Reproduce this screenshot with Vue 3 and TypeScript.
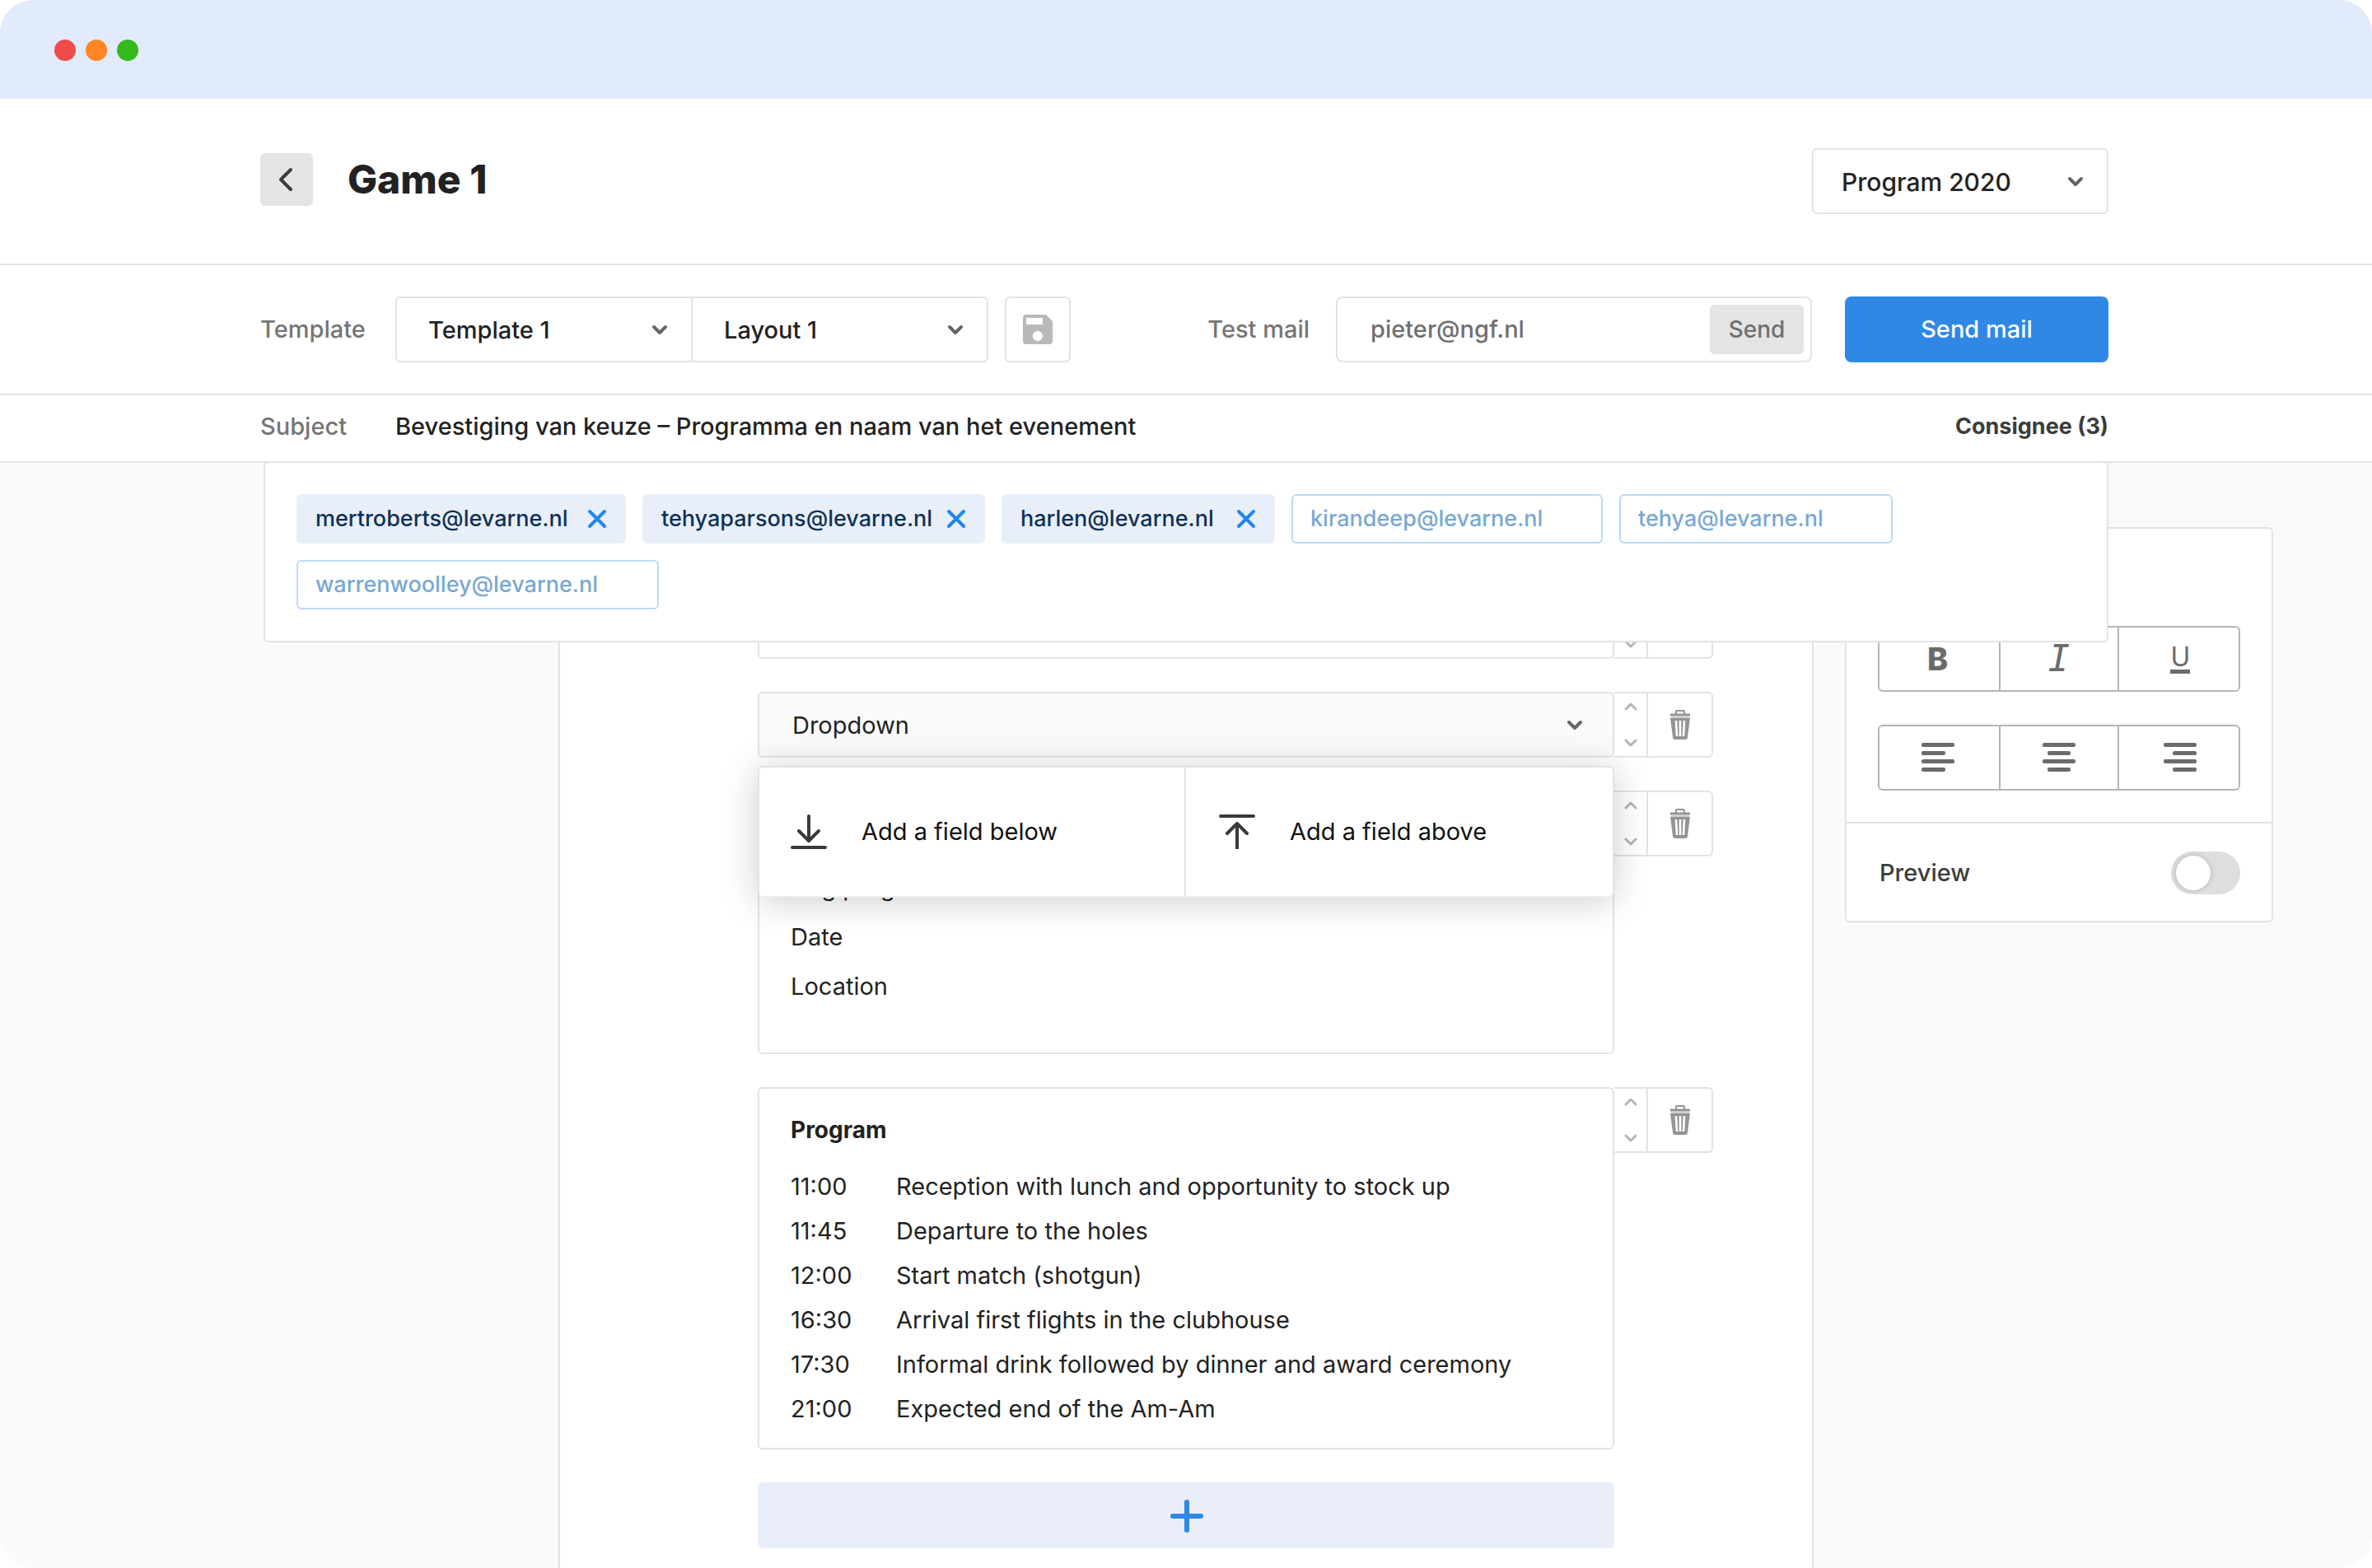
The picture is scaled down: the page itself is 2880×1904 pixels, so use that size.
<script setup lang="ts">
import { ref } from 'vue'

interface Chip {
  email: string
  width: number
}

interface ScheduleRow {
  time: string
  text: string
}

const selected: Chip[] = [
  { email: 'mertroberts@levarne.nl', width: 400 },
  { email: 'tehyaparsons@levarne.nl', width: 416 },
  { email: 'harlen@levarne.nl', width: 332 },
]

const suggested: Chip[] = [
  { email: 'kirandeep@levarne.nl', width: 378 },
  { email: 'tehya@levarne.nl', width: 332 },
  { email: 'warrenwoolley@levarne.nl', width: 440 },
]

const schedule: ScheduleRow[] = [
  { time: '11:00', text: 'Reception with lunch and opportunity to stock up' },
  { time: '11:45', text: 'Departure to the holes' },
  { time: '12:00', text: 'Start match (shotgun)' },
  { time: '16:30', text: 'Arrival first flights in the clubhouse' },
  { time: '17:30', text: 'Informal drink followed by dinner and award ceremony' },
  { time: '21:00', text: 'Expected end of the Am-Am' },
]

// Bars of the alignment icons: [x, width] from top to bottom.
const alignments: { name: string; bars: [number, number][] }[] = [
  { name: 'Align left', bars: [[0, 40], [0, 29], [0, 40], [0, 29]] },
  { name: 'Align center', bars: [[0, 40], [6, 28], [0, 40], [6, 28]] },
  { name: 'Align right', bars: [[0, 40], [11, 29], [0, 40], [11, 29]] },
]

const blocks = ['empty', 'dropdown', 'details', 'program'] as const

const subject = ref('Bevestiging van keuze – Programma en naam van het evenement')
const testMail = ref('pieter@ngf.nl')
const preview = ref(false)
</script>

<template>
  <div class="window">
    <div class="titlebar">
      <span class="dot red"></span>
      <span class="dot orange"></span>
      <span class="dot green"></span>
    </div>

    <header class="header">
      <div class="heading">
        <button class="back" type="button" aria-label="Back">
          <svg width="20" height="30" viewBox="0 0 20 30"><path d="M15 3 L3 15 L15 27" /></svg>
        </button>
        <h1>Game 1</h1>
      </div>
      <div class="select program-select">
        <select aria-label="Program">
          <option>Program 2020</option>
        </select>
        <svg class="chevron" width="20" height="14" viewBox="0 0 20 14"><path d="M3 3 L10 10 L17 3" /></svg>
      </div>
    </header>

    <div class="toolbar">
      <label class="label lead" for="template">Template</label>
      <div class="select-pair">
        <div class="select">
          <select id="template">
            <option>Template 1</option>
          </select>
          <svg class="chevron" width="20" height="14" viewBox="0 0 20 14"><path d="M3 3 L10 10 L17 3" /></svg>
        </div>
        <div class="select">
          <select aria-label="Layout">
            <option>Layout 1</option>
          </select>
          <svg class="chevron" width="20" height="14" viewBox="0 0 20 14"><path d="M3 3 L10 10 L17 3" /></svg>
        </div>
      </div>
      <button class="save" type="button" aria-label="Save template">
        <svg width="36" height="36" viewBox="0 0 36 36">
          <path
            fill="#b9b9b9"
            fill-rule="evenodd"
            d="M4 0 H28 L36 8 V32 Q36 36 32 36 H4 Q0 36 0 32 V4 Q0 0 4 0 Z M4 4 V12 H24 V4 Z M18 20 a6 6 0 1 0 0.01 0 Z"
          />
        </svg>
      </button>
      <label class="label test-label" for="test-mail">Test mail</label>
      <div class="test">
        <input id="test-mail" v-model="testMail" type="email" />
        <button class="send" type="button">Send</button>
      </div>
      <button class="send-mail" type="button">Send mail</button>
    </div>

    <div class="subject">
      <label class="label lead" for="subject">Subject</label>
      <input id="subject" v-model="subject" type="text" />
      <button class="consignee" type="button">Consignee (3)</button>
    </div>

    <main class="canvas">
      <section class="recipients" aria-label="Consignees">
        <span v-for="chip in selected" :key="chip.email" class="chip" :style="{ width: chip.width + 'px' }">
          {{ chip.email }}
          <button type="button" :aria-label="'Remove ' + chip.email">
            <svg width="24" height="24" viewBox="0 0 24 24"><path d="M3 3 L21 21 M21 3 L3 21" /></svg>
          </button>
        </span>
        <button
          v-for="chip in suggested"
          :key="chip.email"
          class="chip outline"
          type="button"
          :style="{ width: chip.width + 'px' }"
        >
          {{ chip.email }}
        </button>
      </section>

      <div class="sheet">
        <div v-for="block in blocks" :key="block" class="row">
          <div v-if="block === 'empty'" class="block"></div>

          <div v-else-if="block === 'dropdown'" class="block field">
            <select aria-label="Field type">
              <option>Dropdown</option>
            </select>
            <svg class="chevron" width="20" height="14" viewBox="0 0 20 14"><path d="M3 3 L10 10 L17 3" /></svg>
            <div class="popup">
              <button type="button">
                <svg width="44" height="42" viewBox="0 0 44 42">
                  <path d="M22 2 V31 M10 20 L22 32 L34 20 M2 40 H42" />
                </svg>
                Add a field below
              </button>
              <button type="button">
                <svg width="44" height="42" viewBox="0 0 44 42">
                  <path d="M22 41 V11 M10 23 L22 11 L34 23 M2 2 H42" />
                </svg>
                Add a field above
              </button>
            </div>
          </div>

          <div v-else-if="block === 'details'" class="block details">
            <p>Dag program</p>
            <p>Date</p>
            <p>Location</p>
          </div>

          <div v-else class="block program">
            <h2>Program</h2>
            <table>
              <tbody>
                <tr v-for="item in schedule" :key="item.time">
                  <td class="time">{{ item.time }}</td>
                  <td>{{ item.text }}</td>
                </tr>
              </tbody>
            </table>
          </div>

          <div class="controls">
            <div class="order">
              <button type="button" aria-label="Move up">
                <svg width="16" height="10" viewBox="0 0 16 10"><path d="M2 8 L8 2 L14 8" /></svg>
              </button>
              <button type="button" aria-label="Move down">
                <svg width="16" height="10" viewBox="0 0 16 10"><path d="M2 2 L8 8 L14 2" /></svg>
              </button>
            </div>
            <button class="trash" type="button" aria-label="Delete block">
              <svg width="28" height="38" viewBox="0 0 28 38">
                <path d="M9 6 V3 Q9 2 10 2 H18 Q19 2 19 3 V6" stroke="#949494" stroke-width="2" />
                <path d="M2 11 H26 L23 34 Q23 37 20 37 H8 Q5 37 5 34 Z" fill="#949494" />
                <path d="M2 7 H26" stroke="#949494" stroke-width="3" />
                <path d="M3 10 H25" stroke="#cfcfcf" stroke-width="2" />
                <path d="M9 14 L10 33 M14 14 V33 M19 14 L18 33" stroke="#fff" stroke-width="2.6" />
              </svg>
            </button>
          </div>
        </div>

        <button class="add" type="button" aria-label="Add block">
          <svg width="42" height="42" viewBox="0 0 42 42"><path d="M22 5 V39 M5 22 H39" /></svg>
        </button>
      </div>

      <aside class="card">
        <div class="tools">
          <div class="group">
            <button type="button" class="bold" aria-label="Bold">B</button>
            <button type="button" class="italic" aria-label="Italic">I</button>
            <button type="button" class="underline" aria-label="Underline"><span>U</span></button>
          </div>
          <div class="group">
            <button v-for="item in alignments" :key="item.name" type="button" :aria-label="item.name">
              <svg width="40" height="36" viewBox="0 0 40 36">
                <rect
                  v-for="(bar, i) in item.bars"
                  :key="i"
                  :x="bar[0]"
                  :y="i * 10"
                  :width="bar[1]"
                  height="5"
                  rx="2"
                  fill="#6b6b6b"
                />
              </svg>
            </button>
          </div>
        </div>
        <div class="preview">
          <label for="preview">Preview</label>
          <input id="preview" v-model="preview" type="checkbox" role="switch" />
        </div>
      </aside>
    </main>
  </div>
</template>

<style>
html,
body {
  margin: 0;
  background: #fff;
}
</style>

<style scoped>
* {
  box-sizing: border-box;
}

.window {
  display: flex;
  flex-direction: column;
  min-height: 100vh;
  overflow: hidden;
  border-radius: 40px;
  background: #fff;
  color: #222;
  font: 400 29px/40px Inter, 'Liberation Sans', sans-serif;
}

button,
input,
select {
  margin: 0;
  padding: 0;
  border: 0;
  background: none;
  color: inherit;
  font: inherit;
}

select {
  appearance: none;
  width: 100%;
  height: 100%;
  padding: 2px 0 0 38px;
}

svg {
  display: block;
  flex: none;
  fill: none;
  stroke-linecap: round;
  stroke-linejoin: round;
}

.titlebar {
  display: flex;
  align-items: flex-start;
  gap: 12px;
  height: 120px;
  padding: 48px 66px;
  background: #e2ebfc;
}

.dot {
  width: 26px;
  height: 26px;
  border-radius: 50%;
}

.red {
  background: #ee4b4b;
}

.orange {
  background: #ff8624;
}

.green {
  background: #35b91d;
}

.header,
.toolbar,
.subject {
  display: flex;
  align-items: center;
  padding: 0 320px 0 316px;
  border-bottom: 2px solid #e3e3e3;
}

.header {
  justify-content: space-between;
  height: 202px;
}

.heading {
  display: flex;
  align-items: center;
  gap: 42px;
  padding-bottom: 4px;
}

.back {
  display: grid;
  place-items: center;
  width: 64px;
  height: 64px;
  border-radius: 6px;
  background: #e4e4e4;
}

.back svg {
  stroke: #3c3c3c;
  stroke-width: 4;
}

h1 {
  margin: 0;
  font-size: 48px;
  font-weight: 800;
  line-height: 64px;
}

.select {
  position: relative;
  flex: 1;
  font-weight: 500;
}

.chevron {
  position: absolute;
  top: 50%;
  right: 28px;
  margin-top: -6px;
  stroke: #666;
  stroke-width: 4;
  pointer-events: none;
}

.program-select {
  flex: none;
  width: 360px;
  height: 80px;
  border: 2px solid #e3e3e3;
  border-radius: 6px;
  font-size: 30px;
}

.program-select select {
  padding-left: 34px;
}

.toolbar {
  height: 158px;
}

.label {
  color: #757575;
  font-weight: 500;
}

.lead {
  flex: none;
  width: 164px;
}

.select-pair {
  display: flex;
  flex: 0 1 720px;
  height: 80px;
  border: 2px solid #e3e3e3;
  border-radius: 6px;
}

.select + .select {
  border-left: 2px solid #e3e3e3;
}

.save {
  display: grid;
  place-items: center;
  width: 80px;
  height: 80px;
  margin-left: 20px;
  border: 2px solid #e3e3e3;
  border-radius: 6px;
}

.test-label {
  margin-left: auto;
}

.test {
  display: flex;
  align-items: center;
  flex: 0 1 578px;
  min-width: 0;
  height: 80px;
  margin: 0 40px 0 32px;
  padding: 0 8px 0 40px;
  border: 2px solid #e3e3e3;
  border-radius: 8px;
  color: #6f6f6f;
  font-weight: 500;
}

.test input {
  flex: 1;
  width: 0;
}

.send {
  width: 114px;
  height: 60px;
  border-radius: 6px;
  background: #e4e4e4;
  font-size: 28px;
}

.send-mail {
  width: 320px;
  height: 80px;
  border-radius: 8px;
  background: #2f88e6;
  color: #fff;
  font-weight: 500;
}

.subject {
  height: 82px;
  padding-bottom: 4px;
}

.subject input {
  flex: 1;
  min-width: 0;
  font-weight: 500;
}

.consignee {
  color: #3c3c3c;
  font-size: 27px;
  font-weight: 700;
}

.canvas {
  position: relative;
  display: flex;
  flex: 1;
  justify-content: flex-end;
  gap: 38px;
  padding: 78px 120px 0 0;
  background: #fafafa;
}

.recipients {
  position: absolute;
  z-index: 5;
  top: -2px;
  left: 320px;
  right: 320px;
  display: flex;
  flex-wrap: wrap;
  gap: 20px;
  padding: 38px;
  border: 2px solid #e3e3e3;
  border-radius: 6px;
  background: #fff;
}

.chip {
  display: flex;
  align-items: center;
  justify-content: space-between;
  height: 60px;
  padding: 0 23px;
  border-radius: 6px;
  background: #e9eff8;
  color: #0e3259;
  font-size: 27px;
  font-weight: 500;
}

.chip svg {
  stroke: #2186ee;
  stroke-width: 4;
}

.outline {
  padding: 0 21px;
  border: 2px solid #bcdafa;
  background: #fff;
  color: #79a8d3;
}

.sheet {
  flex: 0 1 1524px;
  display: flex;
  flex-direction: column;
  gap: 40px;
  padding: 80px 120px 24px 240px;
  border: solid #e3e3e3;
  border-width: 0 2px;
  background: #fff;
}

.row {
  display: flex;
  align-items: flex-start;
}

.block {
  flex: 1;
  min-height: 80px;
  border: 2px solid #e3e3e3;
  border-radius: 6px;
}

.field {
  position: relative;
  height: 80px;
  background: #fafafa;
}

.field select {
  padding-left: 40px;
}

.field .chevron {
  right: 36px;
}

.popup {
  position: absolute;
  z-index: 1;
  top: 88px;
  left: -2px;
  right: -2px;
  display: flex;
  height: 160px;
  border: 2px solid #e3e3e3;
  border-bottom-color: #eee;
  border-radius: 6px;
  background: #fff;
  box-shadow: 0 4px 44px rgba(0, 0, 0, 0.2);
  color: #111;
}

.popup button {
  display: flex;
  flex: 1;
  align-items: center;
  gap: 42px;
  padding-left: 38px;
}

.popup button + button {
  padding-left: 40px;
  border-left: 2px solid #e3e3e3;
}

.popup svg {
  stroke: #3a3a3a;
  stroke-width: 4;
}

.details {
  padding: 86px 38px 50px;
}

.details p {
  margin: 0;
  line-height: 60px;
}

.program {
  padding: 30px 38px 20px;
}

h2 {
  margin: 0 0 22px;
  font-size: 28px;
  font-weight: 700;
  line-height: 40px;
}

table {
  border-collapse: collapse;
}

td {
  height: 54px;
  padding: 0;
}

.time {
  width: 128px;
}

.controls {
  position: relative;
  z-index: 2;
  display: flex;
  width: 120px;
  height: 80px;
  border: 2px solid #e3e3e3;
  border-left: 0;
  border-radius: 0 6px 6px 0;
  background: #fff;
}

/* Later rows stay below the shadow of the open popup. */
.row:nth-child(3) .controls {
  z-index: 0;
}

.order {
  display: flex;
  flex-direction: column;
  width: 41px;
  border-right: 2px solid #e3e3e3;
}

.order button {
  display: grid;
  place-items: center;
  flex: 1;
}

.order button:first-child {
  padding-bottom: 2px;
}

.order button:last-child {
  padding-top: 10px;
}

.order svg {
  stroke: #b5b5b5;
  stroke-width: 3;
}

.trash {
  display: grid;
  place-items: center;
  flex: 1;
}

.trash svg {
  stroke-linecap: butt;
}

.add {
  display: grid;
  place-items: center;
  height: 80px;
  margin-right: 120px;
  border-radius: 6px;
  background: #e9eef8;
}

.add svg {
  stroke: #2f88e6;
  stroke-width: 6;
}

.card {
  flex: 0 0 520px;
  align-self: flex-start;
  border: 2px solid #e3e3e3;
  border-radius: 6px;
  background: #fff;
}

.tools {
  display: flex;
  flex-direction: column;
  gap: 40px;
  padding: 118px 38px 38px;
  border-bottom: 2px solid #e3e3e3;
}

.group {
  display: flex;
  height: 80px;
  border: 2px solid #b5b5b5;
  border-radius: 6px;
  color: #6b6b6b;
}

.group button {
  display: grid;
  place-items: center;
  flex: 1;
}

.group button + button {
  border-left: 2px solid #b5b5b5;
}

.group button:first-child {
  padding-right: 4px;
}

.group button:last-child {
  padding-left: 4px;
}

.bold {
  font-size: 38px;
  font-weight: 800;
}

.italic {
  font-family: 'DejaVu Sans Mono', monospace;
  font-size: 44px;
  font-style: italic;
}

.underline span {
  border-bottom: 5px solid #6b6b6b;
  font-size: 32px;
  line-height: 30px;
}

.preview {
  display: flex;
  align-items: center;
  justify-content: space-between;
  height: 118px;
  padding: 2px 38px 0 40px;
  color: #3c3c3c;
  font-weight: 500;
}

.preview input {
  appearance: none;
  display: flex;
  align-items: center;
  width: 84px;
  height: 52px;
  padding: 0 6px;
  border-radius: 26px;
  background: #dedede;
}

.preview input::before {
  content: '';
  width: 42px;
  height: 42px;
  border-radius: 50%;
  background: #fff;
  box-shadow: 0 0 6px rgba(0, 0, 0, 0.2);
}

.preview input:checked {
  justify-content: flex-end;
  background: #2f88e6;
}
</style>
